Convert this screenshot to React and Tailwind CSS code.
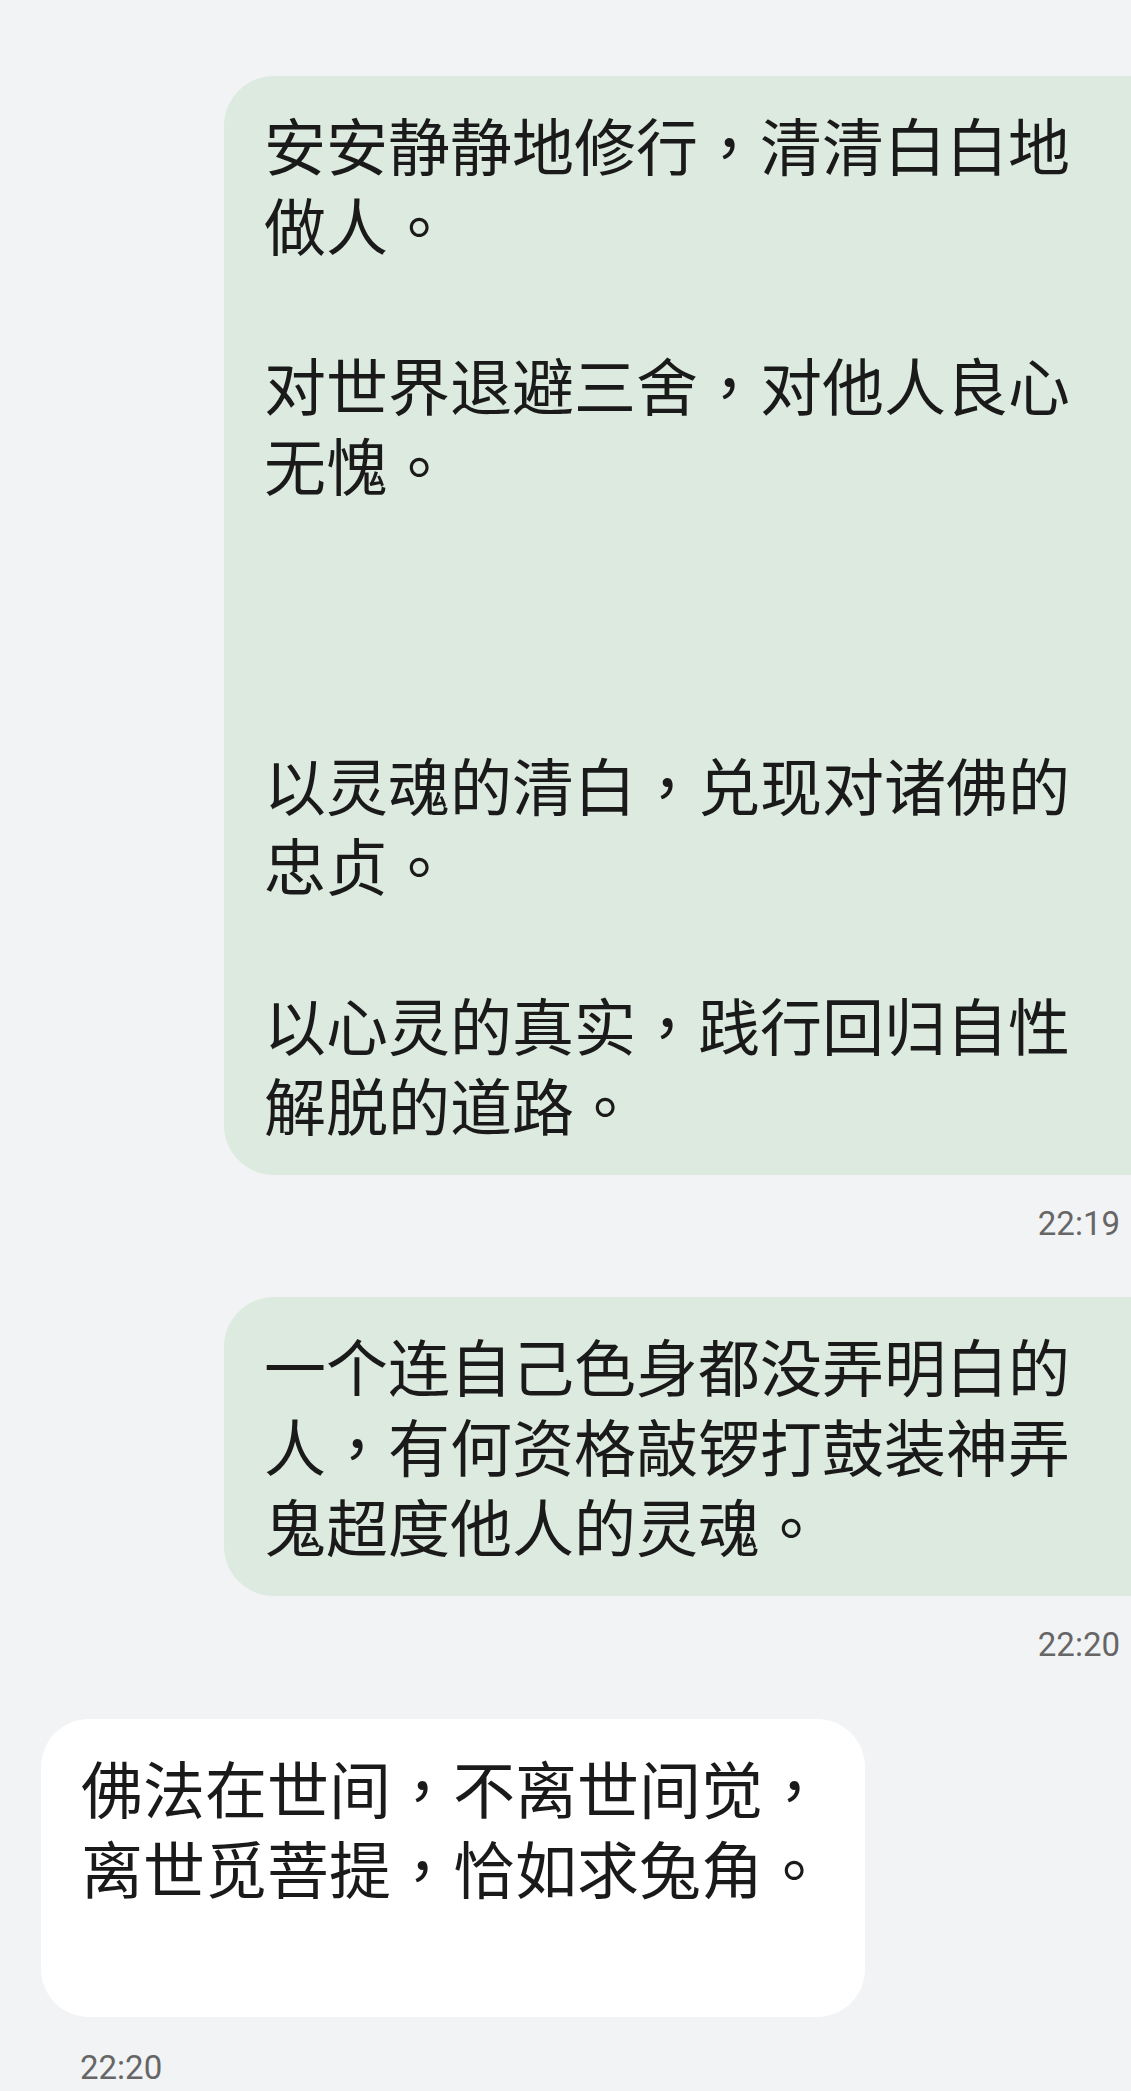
import React from "react";

const cjk = "font-['Noto_Sans_CJK_SC','Noto_Sans_CJK_JP',sans-serif]";

function Line({ text }) {
  if (!text) return <div className="h-[80px]" />;
  const parts = text.split(/([，。])/).filter((p) => p !== "");
  return (
    <div className="h-[80px] whitespace-nowrap">
      {parts.map((p, i) =>
        p === "，" || p === "。" ? (
          <span key={i} className="font-['Noto_Sans_CJK_TC',sans-serif]">
            {p}
          </span>
        ) : (
          <span key={i}>{p}</span>
        )
      )}
    </div>
  );
}

function Lines({ text }) {
  return text.split("\n").map((l, i) => <Line key={i} text={l} />);
}

function GreenBubble({ text }) {
  return (
    <div
      className={`ml-[224px] mr-[-80px] rounded-[50px] bg-[#dceadf] pl-[40px] pr-[120px] pt-[28px] pb-[31px] text-[62px] leading-[80px] text-[#1a1a1a] ${cjk}`}
    >
      <Lines text={text} />
    </div>
  );
}

function TimeRight({ t }) {
  return (
    <div className="mt-[29px] pr-[11px] text-right font-['Roboto',sans-serif] text-[33px] leading-[40px] text-[#666666]">
      {t}
    </div>
  );
}

export default function App() {
  const b1 =
    "安安静静地修行，清清白白地\n做人。\n\n对世界退避三舍，对他人良心\n无愧。\n\n\n\n以灵魂的清白，兑现对诸佛的\n忠贞。\n\n以心灵的真实，践行回归自性\n解脱的道路。";
  const b2 = "一个连自己色身都没弄明白的\n人，有何资格敲锣打鼓装神弄\n鬼超度他人的灵魂。";
  const b3 = "佛法在世间，不离世间觉，\n离世觅菩提，恰如求兔角。\n";
  return (
    <div className="w-full min-h-[2091px] overflow-hidden bg-[#f2f3f5] pt-[76px]">
      <GreenBubble text={b1} />
      <TimeRight t="22:19" />
      <div className="mt-[53px]">
        <GreenBubble text={b2} />
      </div>
      <TimeRight t="22:20" />
      <div className="mt-[54px] pl-[41px]">
        <div
          className={`inline-block rounded-[48px] bg-white pl-[40px] pr-[40px] pt-[28px] pb-[30px] text-[62px] leading-[80px] text-[#1a1a1a] ${cjk}`}
        >
          <Lines text={b3} />
        </div>
      </div>
      <div className="mt-[31px] pl-[80px] font-['Roboto',sans-serif] text-[33px] leading-[40px] text-[#666666]">
        22:20
      </div>
    </div>
  );
}
